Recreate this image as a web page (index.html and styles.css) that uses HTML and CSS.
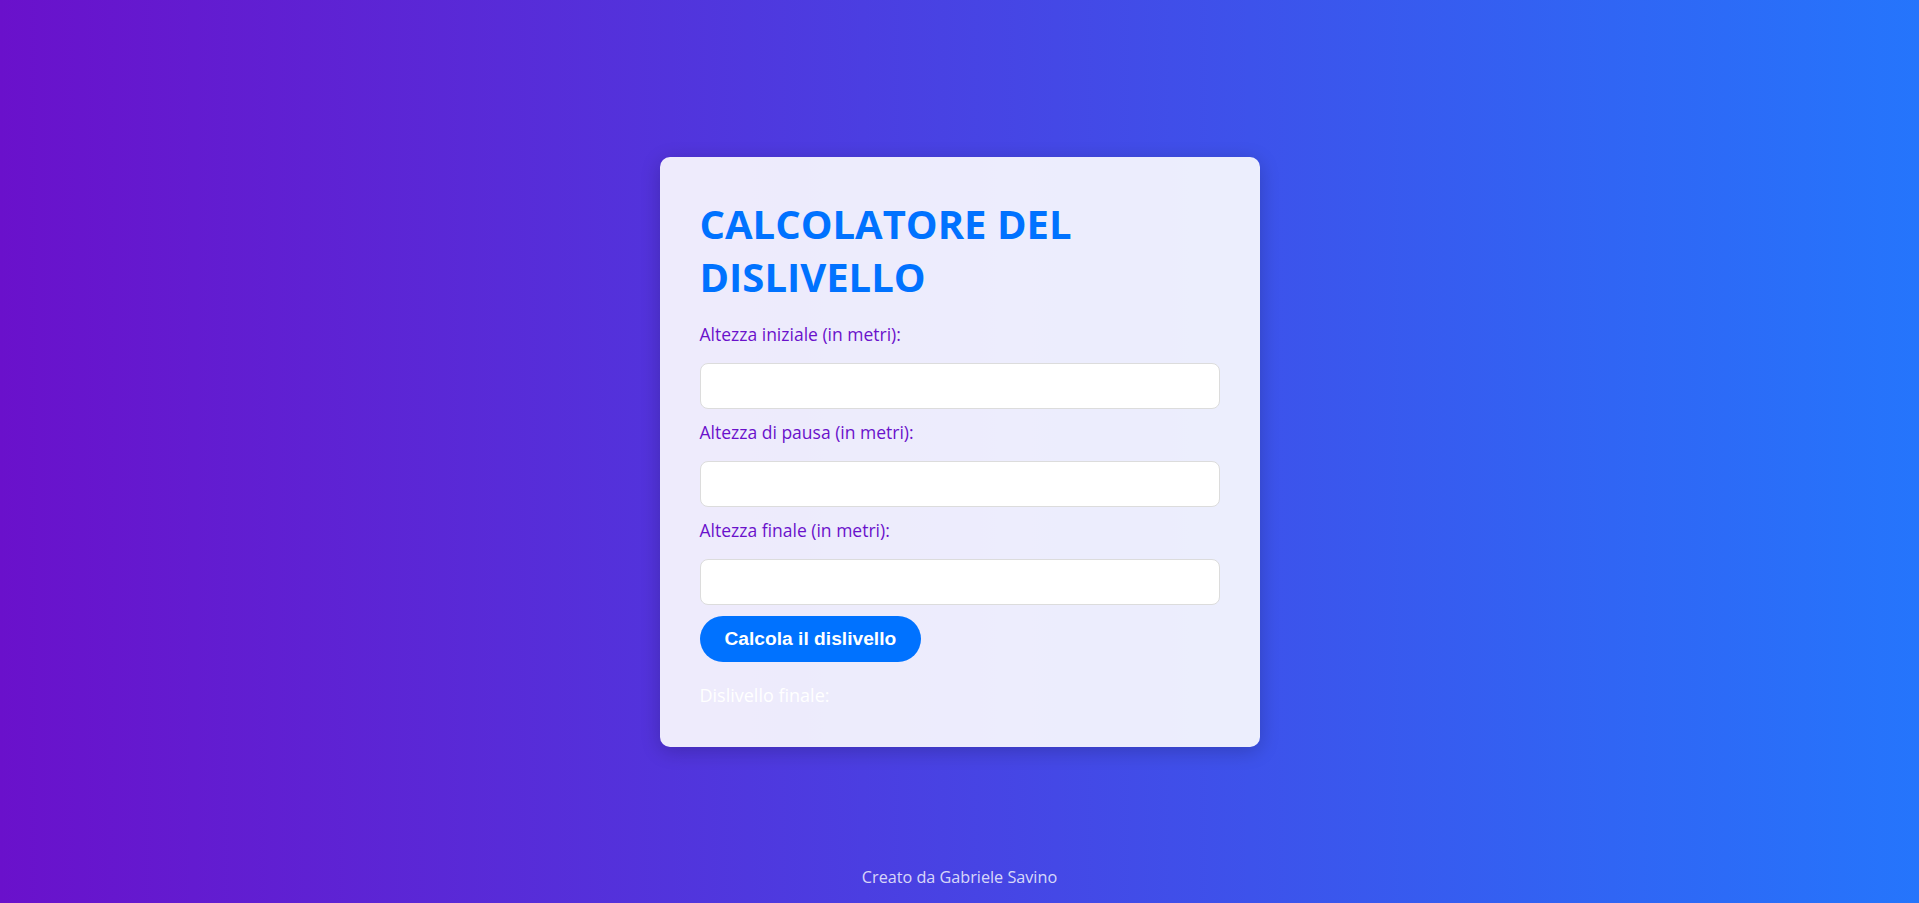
FILE: index.html
```html
<!DOCTYPE html>
<html lang="it">
<head>
<meta charset="utf-8">
<title>Calcolatore del dislivello</title>
<link rel="stylesheet" href="styles.css">
</head>
<body>
  <main class="card">
    <h1 class="title">CALCOLATORE DEL DISLIVELLO</h1>
    <label class="field-label" for="h1">Altezza iniziale (in metri):</label>
    <input class="field-input" id="h1" type="number">
    <label class="field-label" for="h2">Altezza di pausa (in metri):</label>
    <input class="field-input" id="h2" type="number">
    <label class="field-label" for="h3">Altezza finale (in metri):</label>
    <input class="field-input" id="h3" type="number">
    <button class="calc-btn" type="button">Calcola il dislivello</button>
    <p class="result">Dislivello finale:</p>
  </main>
  <footer class="footer">Creato da Gabriele Savino</footer>
</body>
</html>
```

FILE: styles.css
```css
* { box-sizing: border-box; }

html, body { height: 100%; }

body {
  margin: 0;
  min-height: 100vh;
  display: grid;
  grid-template-rows: 1fr auto 1fr;
  justify-items: center;
  background: linear-gradient(to right, #6a11cb, #2575fc);
  font-family: "Open Sans", "Noto Sans", sans-serif;
}

.card {
  grid-row: 2;
  width: 600px;
  padding: 40px;
  background: rgba(255, 255, 255, 0.9);
  border-radius: 10px;
  box-shadow: 0 4px 20px rgba(0, 0, 0, 0.2);
  display: flex;
  flex-direction: column;
  align-items: flex-start;
}

.title {
  margin: 0 0 19px;
  max-width: 520px;
  font-size: 40px;
  line-height: 53px;
  font-weight: 700;
  color: #0072ff;
}

.field-label {
  display: block;
  font-size: 17.5px;
  line-height: 24px;
  color: #6a11cb;
  margin-bottom: 17px;
}

.field-input {
  display: block;
  width: 100%;
  height: 46px;
  margin: 0 0 11px;
  padding: 10px 12px;
  border: 1px solid #dcdcdc;
  border-radius: 8px;
  background: #fff;
  font-size: 16px;
  font-family: inherit;
}

.calc-btn {
  margin: 0;
  padding: 12px 25px;
  border: none;
  border-radius: 23px;
  background: #0072ff;
  color: #fff;
  font-family: "Liberation Sans", Arial, sans-serif;
  font-weight: 700;
  font-size: 19.2px;
  line-height: 22px;
  cursor: pointer;
}

.result {
  margin: 21px 0 0;
  font-size: 18px;
  line-height: 24px;
  color: #fff;
}

.footer {
  grid-row: 3;
  align-self: end;
  padding-bottom: 15px;
  font-size: 16.2px;
  line-height: 22px;
  color: rgba(255, 255, 255, 0.8);
}
```
